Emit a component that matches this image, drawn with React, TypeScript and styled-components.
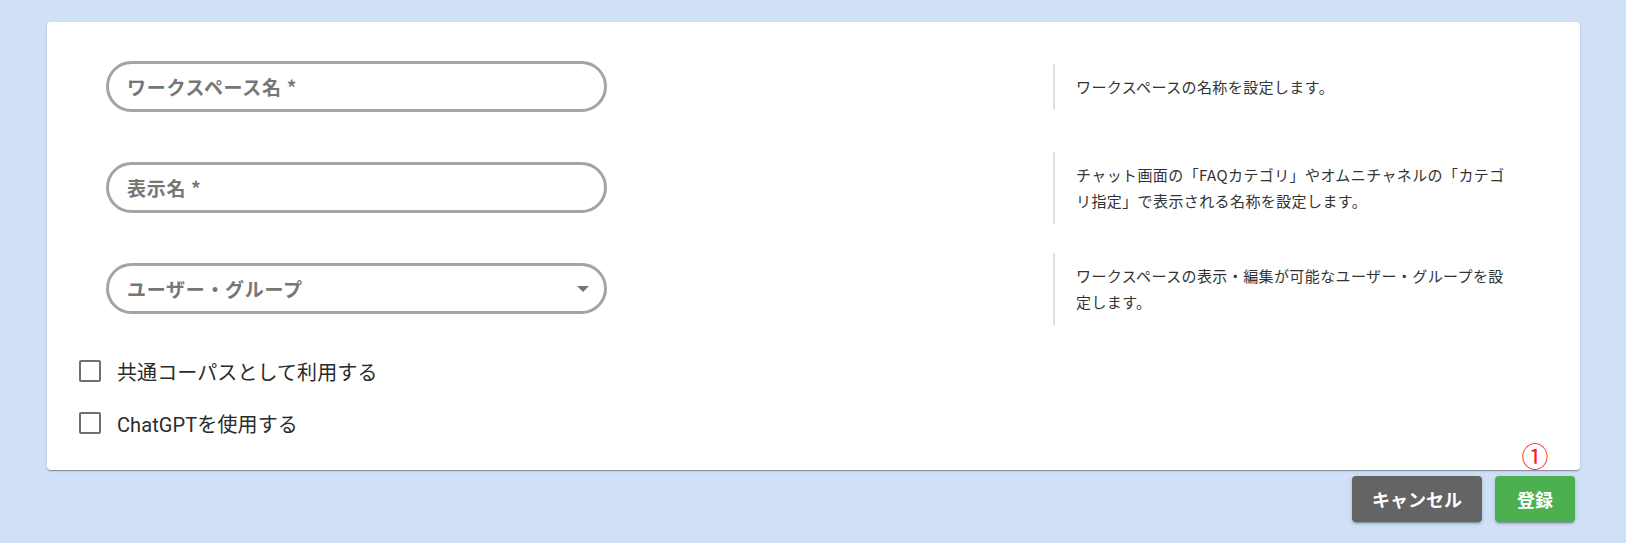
import React from "react";
import styled, { createGlobalStyle } from "styled-components";

const GlobalStyle = createGlobalStyle`
  html, body {
    margin: 0;
    padding: 0;
    background: #d0e0f6;
    font-family: Roboto, "Noto Sans CJK JP", sans-serif;
  }
  * { box-sizing: border-box; }
`;

const Page = styled.div`
  padding: 22px 46px 0 47px;
  height: 543px;
`;

const Card = styled.div`
  background: #ffffff;
  border-radius: 4px;
  box-shadow: 0 2px 1px -1px rgba(0, 0, 0, 0.2), 0 1px 1px 0 rgba(0, 0, 0, 0.14),
    0 1px 3px 0 rgba(0, 0, 0, 0.12);
  padding: 14px 0 21px 0;
`;

const FieldRow = styled.div`
  display: grid;
  grid-template-columns: 947px 1fr;
  align-items: center;
  height: 101px;
  padding-left: 59px;
`;

const Field = styled.div`
  position: relative;
  width: 501px;
  height: 51px;
  border: 3px solid #a4a4a4;
  border-radius: 26px;
  display: flex;
  align-items: center;
  padding: 0 15px 0 18px;
`;

const TextInput = styled.input`
  flex: 1;
  border: none;
  outline: none;
  background: transparent;
  padding: 0;
  font-family: "Noto Sans CJK JP", sans-serif;
  font-size: 19px;
  font-weight: 700;
  letter-spacing: 0.7px;
  color: #555;
  &::placeholder {
    color: #767676;
    opacity: 1;
  }
`;

const SelectLabel = styled.span`
  flex: 1;
  font-family: "Noto Sans CJK JP", sans-serif;
  font-size: 19px;
  font-weight: 700;
  letter-spacing: 0.7px;
  color: #767676;
`;

const Arrow = styled.span`
  width: 0;
  height: 0;
  border-left: 6px solid transparent;
  border-right: 6px solid transparent;
  border-top: 6px solid #757575;
`;

const Help = styled.div`
  width: 460px;
  border-left: 2px solid #e0e0e0;
  padding: 10px 0 10px 21px;
  font-family: "Noto Sans CJK JP", sans-serif;
  font-size: 15px;
  line-height: 26px;
  letter-spacing: 0.4px;
  color: #333333;
`;

const CheckList = styled.div`
  margin-top: 6px;
  display: flex;
  flex-direction: column;
`;

const CheckRow = styled.label`
  display: flex;
  align-items: center;
  height: 52px;
  padding-left: 32px;
  gap: 16px;
  cursor: pointer;
`;

const Box = styled.span`
  width: 22px;
  height: 22px;
  border: 2px solid #6f6f6f;
  border-radius: 2px;
  background: #fff;
`;

const CheckText = styled.span`
  font-family: Roboto, "Noto Sans CJK JP", sans-serif;
  font-size: 20px;
  letter-spacing: 0.1px;
  color: #2b2b2b;
`;

const Actions = styled.div`
  display: flex;
  justify-content: flex-end;
  gap: 13px;
  margin-top: 6px;
  padding-right: 5px;
`;

const ButtonWrap = styled.div`
  position: relative;
`;

const Button = styled.button<{ $tone: "gray" | "green" }>`
  height: 46px;
  min-width: 80px;
  padding: 0 20px;
  border: none;
  border-radius: 4px;
  background: ${(p) => (p.$tone === "green" ? "#4caf50" : "#646464")};
  color: #ffffff;
  font-family: "Noto Sans CJK JP", sans-serif;
  font-size: 18px;
  font-weight: 700;
  box-shadow: 0 3px 1px -2px rgba(0, 0, 0, 0.2), 0 2px 2px 0 rgba(0, 0, 0, 0.14),
    0 1px 5px 0 rgba(0, 0, 0, 0.12);
  cursor: pointer;
`;

const Marker = styled.span`
  position: absolute;
  left: 50%;
  bottom: calc(100% + 7px);
  transform: translateX(-50%);
  font-family: "Noto Sans CJK JP", sans-serif;
  font-size: 27px;
  line-height: 1;
  color: #ff1a1a;
`;

const fields = [
  {
    key: "name",
    label: "ワークスペース名 *",
    help: ["ワークスペースの名称を設定します。"],
  },
  {
    key: "display",
    label: "表示名 *",
    help: [
      "チャット画面の「FAQカテゴリ」やオムニチャネルの「カテゴ",
      "リ指定」で表示される名称を設定します。",
    ],
  },
];

export default function App() {
  return (
    <>
      <GlobalStyle />
      <Page>
        <Card>
          {fields.map((f) => (
            <FieldRow key={f.key}>
              <Field>
                <TextInput placeholder={f.label} />
              </Field>
              <Help>
                {f.help.map((line, i) => (
                  <React.Fragment key={i}>
                    {i > 0 && <br />}
                    {line}
                  </React.Fragment>
                ))}
              </Help>
            </FieldRow>
          ))}
          <FieldRow>
            <Field>
              <SelectLabel>ユーザー・グループ</SelectLabel>
              <Arrow />
            </Field>
            <Help>
              ワークスペースの表示・編集が可能なユーザー・グループを設
              <br />
              定します。
            </Help>
          </FieldRow>
          <CheckList>
            <CheckRow>
              <Box />
              <CheckText>共通コーパスとして利用する</CheckText>
            </CheckRow>
            <CheckRow>
              <Box />
              <CheckText>ChatGPTを使用する</CheckText>
            </CheckRow>
          </CheckList>
        </Card>
        <Actions>
          <ButtonWrap>
            <Button $tone="gray">キャンセル</Button>
          </ButtonWrap>
          <ButtonWrap>
            <Marker>①</Marker>
            <Button $tone="green">登録</Button>
          </ButtonWrap>
        </Actions>
      </Page>
    </>
  );
}
